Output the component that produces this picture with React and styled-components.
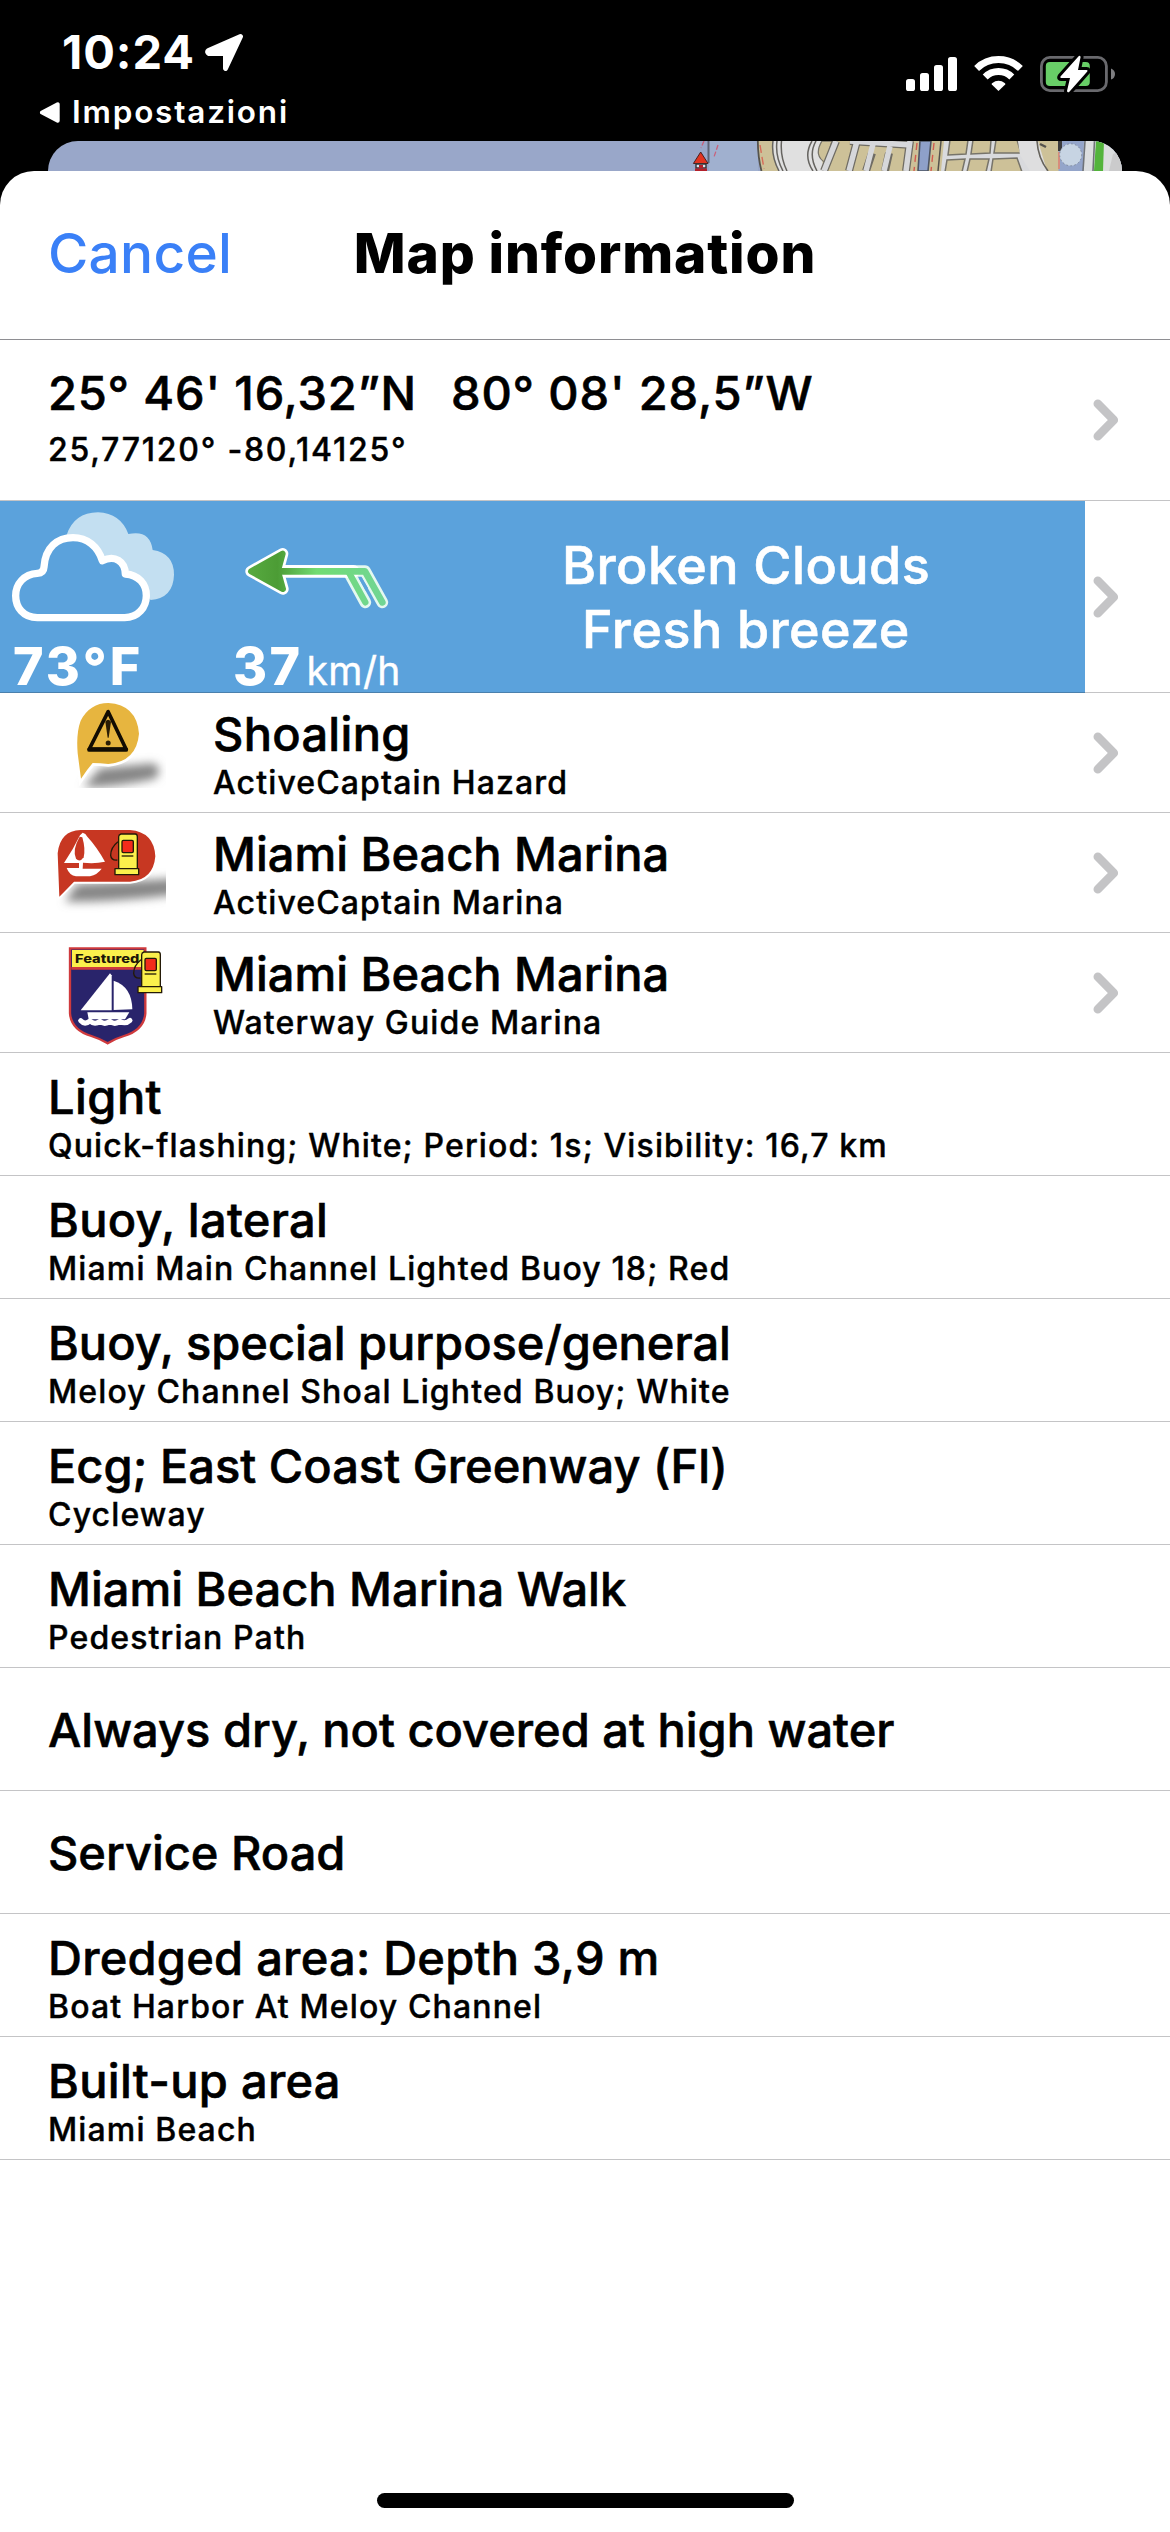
import styled, { createGlobalStyle } from "styled-components";

const places = [
  { icon: "hazard", title: "Shoaling", sub: "ActiveCaptain Hazard", spacing: "0.3px" },
  { icon: "marina", title: "Miami Beach Marina", sub: "ActiveCaptain Marina" },
  { icon: "shield", title: "Miami Beach Marina", sub: "Waterway Guide Marina" },
];

const objects = [
  { title: "Light", sub: "Quick-flashing; White; Period: 1s; Visibility: 16,7 km", spacing: "0.45px" },
  { title: "Buoy, lateral", sub: "Miami Main Channel Lighted Buoy 18; Red", spacing: "0.3px" },
  { title: "Buoy, special purpose/general", sub: "Meloy Channel Shoal Lighted Buoy; White" },
  { title: "Ecg; East Coast Greenway (Fl)", sub: "Cycleway" },
  { title: "Miami Beach Marina Walk", sub: "Pedestrian Path" },
  { title: "Always dry, not covered at high water" },
  { title: "Service Road" },
  { title: "Dredged area: Depth 3,9 m", sub: "Boat Harbor At Meloy Channel", spacing: "0.25px" },
  { title: "Built-up area", sub: "Miami Beach", spacing: "0.3px" },
];

const App = () => {
  return (
    <Screen>
      <GlobalStyle />
      <StatusBar>
        <StatusLeft>
          <TimeRow>
            <Time>10:24</Time>
            <LocationArrow />
          </TimeRow>
          <BackRow>
            <svg width="21" height="21" viewBox="0 0 21 21">
              <path
                d="M3 10.5 L18.7 2.3 V18.7 Z"
                fill="#fff"
                stroke="#fff"
                strokeWidth="4"
                strokeLinejoin="round"
              />
            </svg>
            <BackLabel>Impostazioni</BackLabel>
          </BackRow>
        </StatusLeft>
        <StatusRight>
          <Signal />
          <Wifi />
          <Battery />
        </StatusRight>
      </StatusBar>
      <MapCard>
        <MapStrip />
      </MapCard>
      <Sheet>
        <Header>
          <CancelButton>Cancel</CancelButton>
          <HeaderTitle>Map information</HeaderTitle>
        </Header>
        <CoordsRow>
          <CoordsText>
            <Coords $spacing="0.84px">
              <span>25° 46' 16,32”N</span>
              <span>80° 08' 28,5”W</span>
            </Coords>
            <Sub $height="63px" $spacing="1.76px">
              25,77120° -80,14125°
            </Sub>
          </CoordsText>
          <Chevron />
        </CoordsRow>
        <WeatherRow>
          <WeatherPanel>
            <WeatherCell $width="233px">
              <CloudIcon />
              <Temperature>73°F</Temperature>
            </WeatherCell>
            <WeatherCell $width="174px">
              <WindIcon />
              <BigValue>
                37<Unit>km/h</Unit>
              </BigValue>
            </WeatherCell>
            <WeatherText>
              <div>Broken Clouds</div>
              <div>Fresh breeze</div>
            </WeatherText>
          </WeatherPanel>
          <Chevron />
        </WeatherRow>
        {places.map((item) => (
          <PlaceRow key={item.sub}>
            <PlaceIcon name={item.icon} />
            <PlaceText>
              <Title $spacing={item.spacing}>{item.title}</Title>
              <Sub>{item.sub}</Sub>
            </PlaceText>
            <Chevron />
          </PlaceRow>
        ))}
        {objects.map((item) => (
          <ObjectRow key={item.title} $single={!item.sub}>
            <Title $spacing={item.spacing}>{item.title}</Title>
            {item.sub && <Sub>{item.sub}</Sub>}
          </ObjectRow>
        ))}
        <HomeIndicator />
      </Sheet>
    </Screen>
  );
};

export default App;

const LocationArrow = () => (
  <svg width="39" height="39" viewBox="0 0 39 39">
    <path
      d="M3.5 17.5 L35.5 3.5 L20.5 35.5 V20.5 H4 Q1.5 19 3.5 17.5 Z"
      fill="#fff"
      stroke="#fff"
      strokeWidth="5"
      strokeLinejoin="round"
    />
  </svg>
);

const Signal = () => (
  <svg width="51" height="38" viewBox="0 0 51 38" fill="#fff">
    <rect x="0" y="24" width="9" height="12" rx="2.6" />
    <rect x="14" y="18" width="9" height="18" rx="2.6" />
    <rect x="28" y="10" width="9" height="26" rx="2.6" />
    <rect x="42" y="2" width="9" height="34" rx="2.6" />
  </svg>
);

const Wifi = () => (
  <svg width="49" height="38" viewBox="0 0 49 38">
    <g fill="none" stroke="#fff" strokeWidth="7">
      <path d="M2.6 13.4 A31.5 31.5 0 0 1 46.4 13.4" />
      <path d="M11.2 22 A19 19 0 0 1 37.8 22" />
    </g>
    <path
      d="M24.5 36 L17.8 29.6 Q17.3 28.9 18 28.3 Q24.5 23.4 31 28.3 Q31.7 28.9 31.2 29.6 Z"
      fill="#fff"
    />
  </svg>
);

const Battery = () => (
  <svg width="75" height="40" viewBox="0 0 75 40">
    <rect x="1.4" y="2.4" width="65" height="33.2" rx="8.5" fill="none" stroke="#69696d" strokeWidth="2.8" />
    <rect x="5.8" y="7" width="44" height="24" rx="4" fill="#68ce67" />
    <path d="M71 13.4 Q75 15 75 19 Q75 23 71 24.6 Z" fill="#7d7d80" />
    <path
      d="M38.6 1.2 L20.5 21.6 Q19.6 23 21.3 23 H30 L27 36 Q27.6 38.4 29.6 36.4 L47.3 16.6 Q48.2 15 46.6 15 H38 L40.6 2 Q40 0 38.6 1.2 Z"
      fill="#fff"
      stroke="#000"
      strokeWidth="6"
      strokeLinejoin="round"
      paintOrder="stroke"
    />
  </svg>
);

// sliver of the nautical chart left visible above the sheet
const MapStrip = () => (
  <svg width="1074" height="30" viewBox="48 141 1074 30">
    <rect x="48" y="141" width="1074" height="30" fill="#99a7c9" />
    <path d="M709 141 H758 V171 H709 Z" fill="#a0b0cf" />
    <path d="M708.5 141 V163" stroke="#5e6577" strokeWidth="2" />
    <path d="M704 141 L701 148 M718 145 L714 157" stroke="#c9617b" strokeWidth="1.3" strokeDasharray="5 2" />
    <path d="M700.7 152 L708 163.5 H693.4 Z" fill="#e23420" stroke="#4b2020" strokeWidth="1" />
    <path d="M696 164 H706 V168 H696 Z" fill="#dfe2ee" stroke="#333" strokeWidth="1.4" />
    <path d="M695 168.5 H707 V171 H695 Z M699 165 H703 V168 H699 Z" fill="#b3202a" />
    {/* shore and the ring road */}
    <path d="M757.5 141 H1060 V171 H761 Q757.5 157 757.5 141 Z" fill="#cdc198" />
    <path d="M757.8 141 Q758 158 761.5 171" fill="none" stroke="#55534d" strokeWidth="1.8" />
    <path d="M760 145 L764 169" stroke="#d66a58" strokeWidth="1.4" strokeDasharray="8 4" />
    <path d="M773 141 H822 Q818 156 826 171 H779 Q771 156 773 141 Z" fill="#e0e0e0" />
    <path
      d="M773 141 Q771 156 779 171 M777 141 Q775 156 783 171 M781.5 141 Q780 157 787 171 M812 141 Q803 156 813 171 M816 141 Q808 155 817 171"
      fill="none"
      stroke="#666460"
      strokeWidth="1.5"
    />
    <path d="M822 141 Q813 156 826 163 L832 141 Z" fill="#cdc198" stroke="#77746a" strokeWidth="1.3" />
    {/* street blocks */}
    <g fill="none" stroke="#6f6c64" strokeWidth="8">
      <path d="M836 141 L824 171 M857 141 L849 171 M872 153 L866 171 M889 153 L885 171 M910 141 L906 171" />
      <path d="M850 141 L912 145" />
    </g>
    <g fill="none" stroke="#d6d7da" strokeWidth="5.5">
      <path d="M836 141 L824 171 M857 141 L849 171 M873 144 L866 171 M890 146 L884 171 M910 141 L906 171" />
      <path d="M850 141 L912 145" />
    </g>
    <path d="M918 171 L920 141 H931 L928 171 Z" fill="#8ea0c9" stroke="#4e5563" strokeWidth="1.6" />
    <path d="M917 143 L914 171 M934 143 L931 171" stroke="#d25d50" strokeWidth="1.4" strokeDasharray="7 5" />
    <path d="M941 141 L938 171" stroke="#55534d" strokeWidth="1.5" />
    <path d="M944 141 H1018 L1040 171 H941 Z" fill="#d9dadd" />
    <g fill="#cdc198" stroke="#77746a" strokeWidth="1.5">
      <path d="M950 140 H968 L966 154 L948 155 Z" />
      <path d="M973 140 H991 L990 153 L971 154 Z" />
      <path d="M996 140 H1017 L1021 153 L994 153 Z" />
      <path d="M947 160 L965 159 L962 172 H945 Z" />
      <path d="M970 159 L989 159 L986 172 H967 Z" />
      <path d="M993 159 L1017 158 L1022 172 H991 Z" />
    </g>
    <path d="M1018 141 H1038 L1047 171 H1030 L1020 155 Z" fill="#dededf" />
    <path d="M1037 141 Q1038 158 1048 171" fill="none" stroke="#66635c" strokeWidth="1.6" />
    <path d="M1040 144 L1046 147" stroke="#55534d" strokeWidth="2.4" />
    <rect x="1058.5" y="141" width="26" height="30" fill="#94a5ca" />
    <path d="M1058 141 H1062 V151 H1058 Z" fill="#3b3a3c" />
    <path d="M1059 152 V169" stroke="#d78c7c" strokeWidth="2" />
    <circle cx="1070.7" cy="154.8" r="11" fill="#c7d4e3" stroke="#7d8798" strokeWidth="1" strokeDasharray="1.5 2.5" />
    <path d="M1084 141 H1122 V171 H1083 Z" fill="#dcdedf" />
    <path d="M1085 141 L1083 171 M1094.5 141 L1093 171" stroke="#6f7378" strokeWidth="1.6" />
    <path d="M1096 141 H1104 L1103 171 H1094 Z" fill="#53b43c" />
    <path d="M1113 154 L1122 150 V171 H1109 Z" fill="#cbcbcc" />
  </svg>
);

const Chevron = () => (
  <ChevronSvg width="26" height="42" viewBox="0 0 26 42">
    <path
      d="M4.8 4.8 L20.8 21 L4.8 37.2"
      fill="none"
      stroke="#c4c4c6"
      strokeWidth="8.6"
      strokeLinecap="round"
      strokeLinejoin="round"
    />
  </ChevronSvg>
);

const CloudIcon = () => (
  <WeatherSvg width="180" height="135" viewBox="0 33 540 405">
    <path
      d="M200 135 Q222 68 294 67 Q362 70 385 132 Q450 118 458 180 Q522 190 522 254 Q520 324 452 330 L380 250 L300 210 Z"
      fill="#c3dff1"
    />
    <path
      d="M112 383 C70 383 47 352 47 317 C47 282 72 252 112 250 Q131 249 132 231 C136 172 172 143 219 143 C262 143 294 170 307 212 C345 194 375 214 376 252 C416 255 439 282 439 317 C439 352 414 383 374 383 Z"
      fill="#5ba2dc"
      stroke="#fff"
      strokeWidth="22"
      strokeLinejoin="round"
    />
  </WeatherSvg>
);

const WindIcon = () => (
  <WeatherSvg width="174" height="135" viewBox="699 33 522 405">
    <defs>
      <linearGradient id="wind" gradientUnits="userSpaceOnUse" x1="740" y1="0" x2="1160" y2="0">
        <stop offset="0" stopColor="#58ab41" />
        <stop offset="0.22" stopColor="#4c9c35" />
        <stop offset="0.5" stopColor="#72dc72" />
        <stop offset="1" stopColor="#70d596" />
      </linearGradient>
    </defs>
    <g fill="none" strokeLinecap="round" strokeLinejoin="round">
      <path d="M753 244 L848 191 L834 243 L849 297 Z" stroke="#fff" strokeWidth="34" />
      <path d="M834 243 H1095 L1147 337" stroke="#e4f8f0" strokeWidth="35" />
      <path d="M1046 246 L1096 337" stroke="#e4f8f0" strokeWidth="35" />
      <path d="M834 244 H1060" stroke="#fff" strokeWidth="38" />
      <path d="M753 244 L848 191 L834 243 L849 297 Z" fill="url(#wind)" stroke="url(#wind)" strokeWidth="18" />
      <path d="M834 244.1 L1095 243.9 L1147 337" stroke="url(#wind)" strokeWidth="20" />
      <path d="M1046 246 L1096 337" stroke="url(#wind)" strokeWidth="19" />
    </g>
    <path d="M1076 264 H1086 L1104 294 L1097 302 Z" fill="#5ba2dc" />
  </WeatherSvg>
);

const Pump = ({ x, y }) => (
  <g transform={`translate(${x} ${y})`} stroke="#241a08" strokeWidth="4" strokeLinejoin="round">
    <path d="M24 25 Q2 42 2 66 Q4 82 22 80" fill="none" />
    <path d="M26 10 Q26 4 33 2 H76 Q82 3 82 10 V108 H26 Z" fill="#fbf04c" />
    <rect x="36" y="21" width="34" height="37" rx="4" fill="#f22b1b" />
    <path d="M35 68 H70" fill="none" />
    <rect x="15" y="106" width="71" height="18" fill="#fbf04c" />
  </g>
);

const PlaceIcon = ({ name }) => (
  <IconSvg viewBox="0 9 480 357">
    <defs>
      <filter id="soft" x="-20%" y="-60%" width="140%" height="220%">
        <feGaussianBlur stdDeviation="15" />
      </filter>
      <clipPath id="edge">
        <rect x="0" y="0" width="378" height="366" />
      </clipPath>
      <clipPath id="edgeLow">
        <rect x="90" y="0" width="288" height="294" />
      </clipPath>
    </defs>
    {name === "hazard" && (
      <>
        <g clipPath="url(#edgeLow)">
          <path d="M130 292 L180 235 L340 220 Q372 238 345 266 Q240 290 130 292 Z" fill="#858585" filter="url(#soft)" />
        </g>
        <path
          d="M123 266 L113 190 Q108 130 122 92 Q150 39 205 39 Q290 44 297 131 Q290 214 205 222 Q180 219 158 219 Q140 240 123 266 Z"
          fill="#e7b53f"
          stroke="#fff"
          strokeWidth="16"
          paintOrder="stroke"
        />
        <path d="M204.5 65 L148 177 H258 Z" fill="none" stroke="#120c02" strokeWidth="11" strokeLinejoin="round" />
        <path d="M148 179 H258" stroke="#120c02" strokeWidth="13" strokeLinecap="round" />
        <path d="M196 95 Q204 84 213 95 L206 143 H203 Z" fill="#2a1d05" />
        <circle cx="204.5" cy="159" r="7.5" fill="#2a1d05" />
      </>
    )}
    {name === "marina" && (
      <>
        <g clipPath="url(#edge)">
          <path d="M75 275 L110 222 L420 205 V252 Q220 278 75 275 Z" fill="#868686" filter="url(#soft)" />
        </g>
        <path
          d="M58 260 L53 130 Q60 62 122 60 H270 Q342 66 346 139 Q340 210 270 215 H102 Q82 236 58 260 Z"
          fill="#c73722"
          stroke="#fff"
          strokeWidth="12"
          paintOrder="stroke"
        />
        <path
          d="M128 68 Q137 70 142 80 Q170 110 195 155 Q165 162 129 158 L128 176 H185 Q172 194 150 199 H108 Q88 196 80 174 H117 V159 H72 Q100 118 120 76 Z"
          fill="#fff"
        />
        <path d="M119 80 Q96 120 108 146 Q120 158 131 142 Q137 118 127 82 Z" fill="#c73722" />
        <Pump x={210} y={70} />
      </>
    )}
    {name === "shield" && (
      <>
        <path
          d="M90 55 H316 V250 Q312 300 252 318 Q225 326 203 340 Q180 326 154 318 Q94 300 90 250 Z"
          fill="#29246b"
          stroke="#cf3a3d"
          strokeWidth="7"
        />
        <rect x="96" y="60" width="215" height="52" fill="#fbf04c" />
        <path d="M94 115 H312" stroke="#cf3a3d" strokeWidth="8" />
        <Featured x="105" y="98" textLength="193" lengthAdjust="spacingAndGlyphs">
          Featured
        </Featured>
        <path d="M210 130 L215 136 V241 H122 Z" fill="#fff" />
        <path d="M221 152 Q276 170 277 238 L221 240 Z" fill="#fff" />
        <path d="M142 247 H268 L255 268 H146 Z" fill="#fff" />
        <path
          d="M122 272 Q134 286 150 273 Q164 286 180 274 Q194 286 210 274 Q224 286 240 274 Q256 284 270 271"
          fill="none"
          stroke="#fff"
          strokeWidth="15"
          strokeLinecap="round"
        />
        <Pump x={279} y={64} />
      </>
    )}
  </IconSvg>
);

const GlobalStyle = createGlobalStyle`
  body {
    margin: 0;
    background-color: #000;
    font-family: Inter, "Liberation Sans", sans-serif;
  }
`;

const Screen = styled.div`
  display: flex;
  flex-direction: column;
  width: 1170px;
  height: 2532px;
  overflow: hidden;
  background-color: #000;
`;

const StatusBar = styled.div`
  display: flex;
  justify-content: space-between;
  height: 141px;
  color: #fff;
`;

const StatusLeft = styled.div`
  padding: 25px 0 0 39px;
`;

const TimeRow = styled.div`
  display: flex;
  align-items: center;
  height: 54px;
  padding-left: 23px;
  gap: 10px;
`;

const Time = styled.span`
  font-size: 47px;
  font-weight: 700;
  line-height: 54px;
  letter-spacing: 0.95px;
`;

const BackRow = styled.div`
  display: flex;
  align-items: center;
  height: 38px;
  margin-top: 14px;
  gap: 12px;
`;

const BackLabel = styled.span`
  font-size: 31.5px;
  font-weight: 600;
  line-height: 38px;
  letter-spacing: 1.8px;
`;

const StatusRight = styled.div`
  display: flex;
  align-items: flex-start;
  padding: 55px 55px 0 0;
  gap: 17px;
`;

const MapCard = styled.div`
  width: 1074px;
  height: 30px;
  margin: 0 auto;
  border-radius: 30px 30px 0 0;
  overflow: hidden;

  svg {
    display: block;
  }
`;

const Sheet = styled.div`
  display: flex;
  flex-direction: column;
  flex: 1;
  background-color: #fff;
  border-radius: 34px 34px 0 0;
  color: #000;
`;

const Header = styled.div`
  display: grid;
  grid-template-columns: 1fr auto 1fr;
  align-items: start;
  box-sizing: border-box;
  height: 169px;
  padding: 48px 48px 0;
  border-bottom: 1px solid #8e8e92;
`;

const CancelButton = styled.button`
  justify-self: start;
  padding: 0;
  border: none;
  background: none;
  color: #3a80f7;
  font-family: inherit;
  font-size: 55px;
  font-weight: 500;
  line-height: 68px;
  letter-spacing: 0.25px;
`;

const HeaderTitle = styled.div`
  font-size: 55px;
  font-weight: 800;
  line-height: 68px;
  letter-spacing: 0.85px;
`;

const Row = styled.div`
  display: flex;
  box-sizing: border-box;
  flex-shrink: 0;
  border-bottom: 1px solid #c4c4c6;
`;

const CoordsRow = styled(Row)`
  height: 161px;
  justify-content: space-between;
  padding-right: 51px;
`;

const CoordsText = styled.div`
  padding: 28px 0 0 48px;
`;

const Title = styled.div`
  font-size: 47px;
  font-weight: 500;
  line-height: 50px;
  letter-spacing: ${({ $spacing }) => $spacing || "0"};
  white-space: nowrap;
  -webkit-text-stroke: 0.6px currentColor;
`;

const Coords = styled(Title)`
  display: flex;
  gap: 34px;
`;

const Sub = styled.div`
  font-size: 32px;
  font-weight: 500;
  line-height: ${({ $height }) => $height || "47px"};
  letter-spacing: ${({ $spacing }) => $spacing || "1.13px"};
  white-space: nowrap;
  -webkit-text-stroke: 0.4px currentColor;
`;

const ChevronSvg = styled.svg`
  flex-shrink: 0;
  align-self: center;
`;

const WeatherRow = styled(Row)`
  height: 192px;
  justify-content: space-between;
  padding-right: 51px;
`;

const WeatherPanel = styled.div`
  display: flex;
  width: 1085px;
  height: 192px;
  box-sizing: border-box;
  border-bottom: 1px solid #4a80ad;
  background-color: #5ba2dc;
  color: #fff;
`;

const WeatherCell = styled.div`
  display: flex;
  flex-direction: column;
  flex-shrink: 0;
  width: ${({ $width }) => $width};
`;

const WeatherSvg = styled.svg`
  flex-shrink: 0;
`;

const BigValue = styled.div`
  display: flex;
  align-items: baseline;
  height: 56px;
  font-size: 52px;
  font-weight: 800;
  line-height: 62px;
  letter-spacing: 2.4px;
  white-space: nowrap;
`;

const Temperature = styled(BigValue)`
  padding-left: 13px;
  letter-spacing: 3px;
`;

const Unit = styled.span`
  margin-left: 4px;
  font-size: 39px;
  font-weight: 400;
  letter-spacing: 0.4px;
  -webkit-text-stroke: 0.4px currentColor;
`;

const WeatherText = styled.div`
  display: flex;
  flex: 1;
  flex-direction: column;
  justify-content: center;
  padding-top: 2px;
  font-size: 52px;
  font-weight: 500;
  line-height: 64px;
  letter-spacing: 0.45px;
  text-align: center;
  -webkit-text-stroke: 0.6px currentColor;
`;

const PlaceRow = styled(Row)`
  height: 120px;
  padding: 0 51px 0 40px;
`;

const IconSvg = styled.svg`
  width: 160px;
  height: 119px;
  flex-shrink: 0;
`;

const Featured = styled.text`
  font-family: Inter, "Liberation Sans", sans-serif;
  font-size: 34px;
  font-weight: 800;
  fill: #1d1708;
`;

const PlaceText = styled.div`
  flex: 1;
  padding: 16px 0 0 13px;
`;

const ObjectRow = styled(Row)`
  flex-direction: column;
  height: 123px;
  padding: ${({ $single }) => ($single ? "37px" : "19px")} 48px 0;
`;

const HomeIndicator = styled.div`
  width: 417px;
  height: 15px;
  margin: auto auto 24px;
  border-radius: 8px;
  background-color: #000;
`;
